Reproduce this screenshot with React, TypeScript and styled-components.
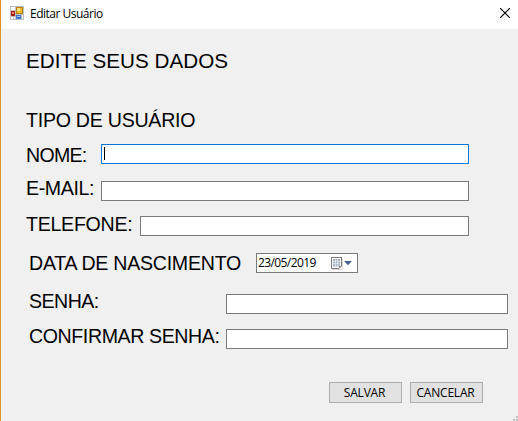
import React from "react";
import styled, { createGlobalStyle } from "styled-components";

const GlobalStyle = createGlobalStyle`
  * { box-sizing: border-box; }
  body { margin: 0; background: #f0f0f0; overflow: hidden; }
`;

const Window = styled.main`
  width: 518px;
  height: 421px;
  display: flex;
  flex-direction: column;
  position: relative;
  background: #f0f0f0;
  border-left: 1px solid #e09420;
  color: #000;
  font-family: "Liberation Sans", Arial, sans-serif;
`;

const TitleBar = styled.header`
  height: 29px;
  flex: none;
  display: flex;
  align-items: flex-start;
  padding: 6px 8px 0 9px;
  background: #fff;
`;

const WindowTitle = styled.span`
  flex: 1;
  margin: -1px 0 0 6px;
  font: 12px/17px "Open Sans", "Noto Sans", sans-serif;
  letter-spacing: -0.5px;
  white-space: nowrap;
`;

const CloseButton = styled.button`
  display: block;
  margin: 2px 0 0;
  padding: 0;
  border: 0;
  background: none;
  line-height: 0;
`;

const Form = styled.form`
  display: flex;
  flex-direction: column;
  padding-left: 25px;
`;

const Heading = styled.h1`
  margin: 20px 0 0;
  font-size: 20.67px;
  line-height: 24px;
  font-weight: 400;
  white-space: nowrap;
`;

const SectionLabel = styled.h2`
  margin: 36px 0 0;
  font-size: 19.6px;
  line-height: 22px;
  font-weight: 400;
  letter-spacing: -0.26px;
  white-space: nowrap;
`;

const Row = styled.div<{ $gap: number; $inset?: number }>`
  display: flex;
  align-items: flex-start;
  height: 20px;
  margin-top: ${(p) => p.$gap}px;
  padding-left: ${(p) => p.$inset ?? 0}px;
`;

const Label = styled.label<{ $width: number; $shift: number; $spacing: number }>`
  flex: none;
  width: ${(p) => p.$width}px;
  margin-top: ${(p) => p.$shift}px;
  font-size: 19.6px;
  line-height: 22px;
  letter-spacing: ${(p) => p.$spacing}px;
  white-space: nowrap;
`;

const Field = styled.div<{ $width: number; $active?: boolean }>`
  width: ${(p) => p.$width}px;
  height: 20px;
  padding: 2px;
  border: 1px solid ${(p) => (p.$active ? "#0078d7" : "#7a7a7a")};
  background: #fff;
`;

const Caret = styled.span`
  display: block;
  width: 1px;
  height: 13px;
  background: #000;
`;

const DateField = styled(Field)`
  display: flex;
  align-items: center;
  justify-content: space-between;
  padding: 0 5px 0 1px;
  font: 12px/18px "Open Sans", "Noto Sans", sans-serif;
  letter-spacing: -0.6px;
`;

const Actions = styled.footer`
  display: flex;
  gap: 8px;
  margin: 33px 0 0 303px;
`;

const Button = styled.button`
  width: 73px;
  height: 21px;
  padding: 1px 2px 0 0;
  border: 1px solid #adadad;
  border-radius: 0;
  background: #e1e1e1;
  color: #000;
  font: 12px/18px "Open Sans", "Noto Sans", sans-serif;
  letter-spacing: -0.2px;
`;

const Grip = styled.svg`
  position: absolute;
  right: 0;
  bottom: 0;
`;

const AppIcon = () => (
  <svg width="14" height="14" viewBox="0 0 14 14" shapeRendering="crispEdges">
    <rect width="14" height="14" fill="#bfbfbf" />
    <path d="M1 1h4v3H1zM1 11h2v2H1zM4 11h1v2H4zM12 9h1v4h-1z" fill="#fff" />
    <rect x="6" y="1" width="7" height="7" fill="#b98200" />
    <rect x="7" y="2" width="5" height="5" fill="#f5bd2d" />
    <rect x="7" y="2" width="3" height="3" fill="#ffe17a" />
    <rect x="1" y="5" width="4" height="5" fill="#a61c14" />
    <rect x="2" y="6" width="2" height="2" fill="#ef8a78" />
    <rect x="6" y="9" width="5" height="4" fill="#3f74cf" />
    <rect x="7" y="10" width="3" height="1" fill="#9cc3f5" />
  </svg>
);

const CloseIcon = () => (
  <svg width="10" height="10" viewBox="0 0 10 10">
    <path d="M0 0L10 10M10 0L0 10" stroke="#000" strokeWidth="1.15" />
  </svg>
);

const CalendarIcon = () => (
  <svg width="21" height="14" viewBox="0 0 21 14">
    <path d="M1 13.500h9.500l1-1V3" fill="none" stroke="#dcd6d4" />
    <path d="M.5 1.500h10v8.500l-2.500 2.500H.5z" fill="#fff" stroke="#7d7878" />
    <path d="M2 3h7v7.500h-7z" fill="#a3afbd" />
    <path d="M2 5.300h7M2 7.700h7M4.300 3v7.500M6.700 3v7.500" stroke="#f2f4f7" strokeWidth=".7" />
    <path d="M8 12.500v-2.500h2.500z" fill="#8c8787" />
    <path d="M13 5h8l-4 4.200z" fill="#48648c" />
  </svg>
);

export default function App() {
  return (
    <>
      <GlobalStyle />
      <Window>
        <TitleBar>
          <AppIcon />
          <WindowTitle>Editar Usuário</WindowTitle>
          <CloseButton type="button" aria-label="Fechar">
            <CloseIcon />
          </CloseButton>
        </TitleBar>
        <Form>
          <Heading>EDITE SEUS DADOS</Heading>
          <SectionLabel>TIPO DE USUÁRIO</SectionLabel>
          <Row $gap={13}>
            <Label $width={75} $shift={0} $spacing={-0.75}>NOME:</Label>
            <Field $width={368} $active><Caret /></Field>
          </Row>
          <Row $gap={17}>
            <Label $width={75} $shift={-4} $spacing={-0.4}>E-MAIL:</Label>
            <Field $width={368} />
          </Row>
          <Row $gap={15}>
            <Label $width={114} $shift={-3} $spacing={-0.28}>TELEFONE:</Label>
            <Field $width={329} />
          </Row>
          <Row $gap={17} $inset={3}>
            <Label $width={227} $shift={-1} $spacing={-0.26}>DATA DE NASCIMENTO</Label>
            <DateField $width={102}>
              23/05/2019
              <CalendarIcon />
            </DateField>
          </Row>
          <Row $gap={21} $inset={3}>
            <Label $width={197} $shift={-4} $spacing={-0.55}>SENHA:</Label>
            <Field $width={282} />
          </Row>
          <Row $gap={15} $inset={3}>
            <Label $width={197} $shift={-4} $spacing={-0.41}>CONFIRMAR SENHA:</Label>
            <Field $width={282} />
          </Row>
          <Actions>
            <Button type="button">SALVAR</Button>
            <Button type="button">CANCELAR</Button>
          </Actions>
        </Form>
        <Grip width="5" height="5" viewBox="0 0 5 5" shapeRendering="crispEdges">
          <path d="M3 0h2v2H3zM3 3h2v2H3zM0 3h2v2H0z" fill="#bfbfbf" />
        </Grip>
      </Window>
    </>
  );
}
